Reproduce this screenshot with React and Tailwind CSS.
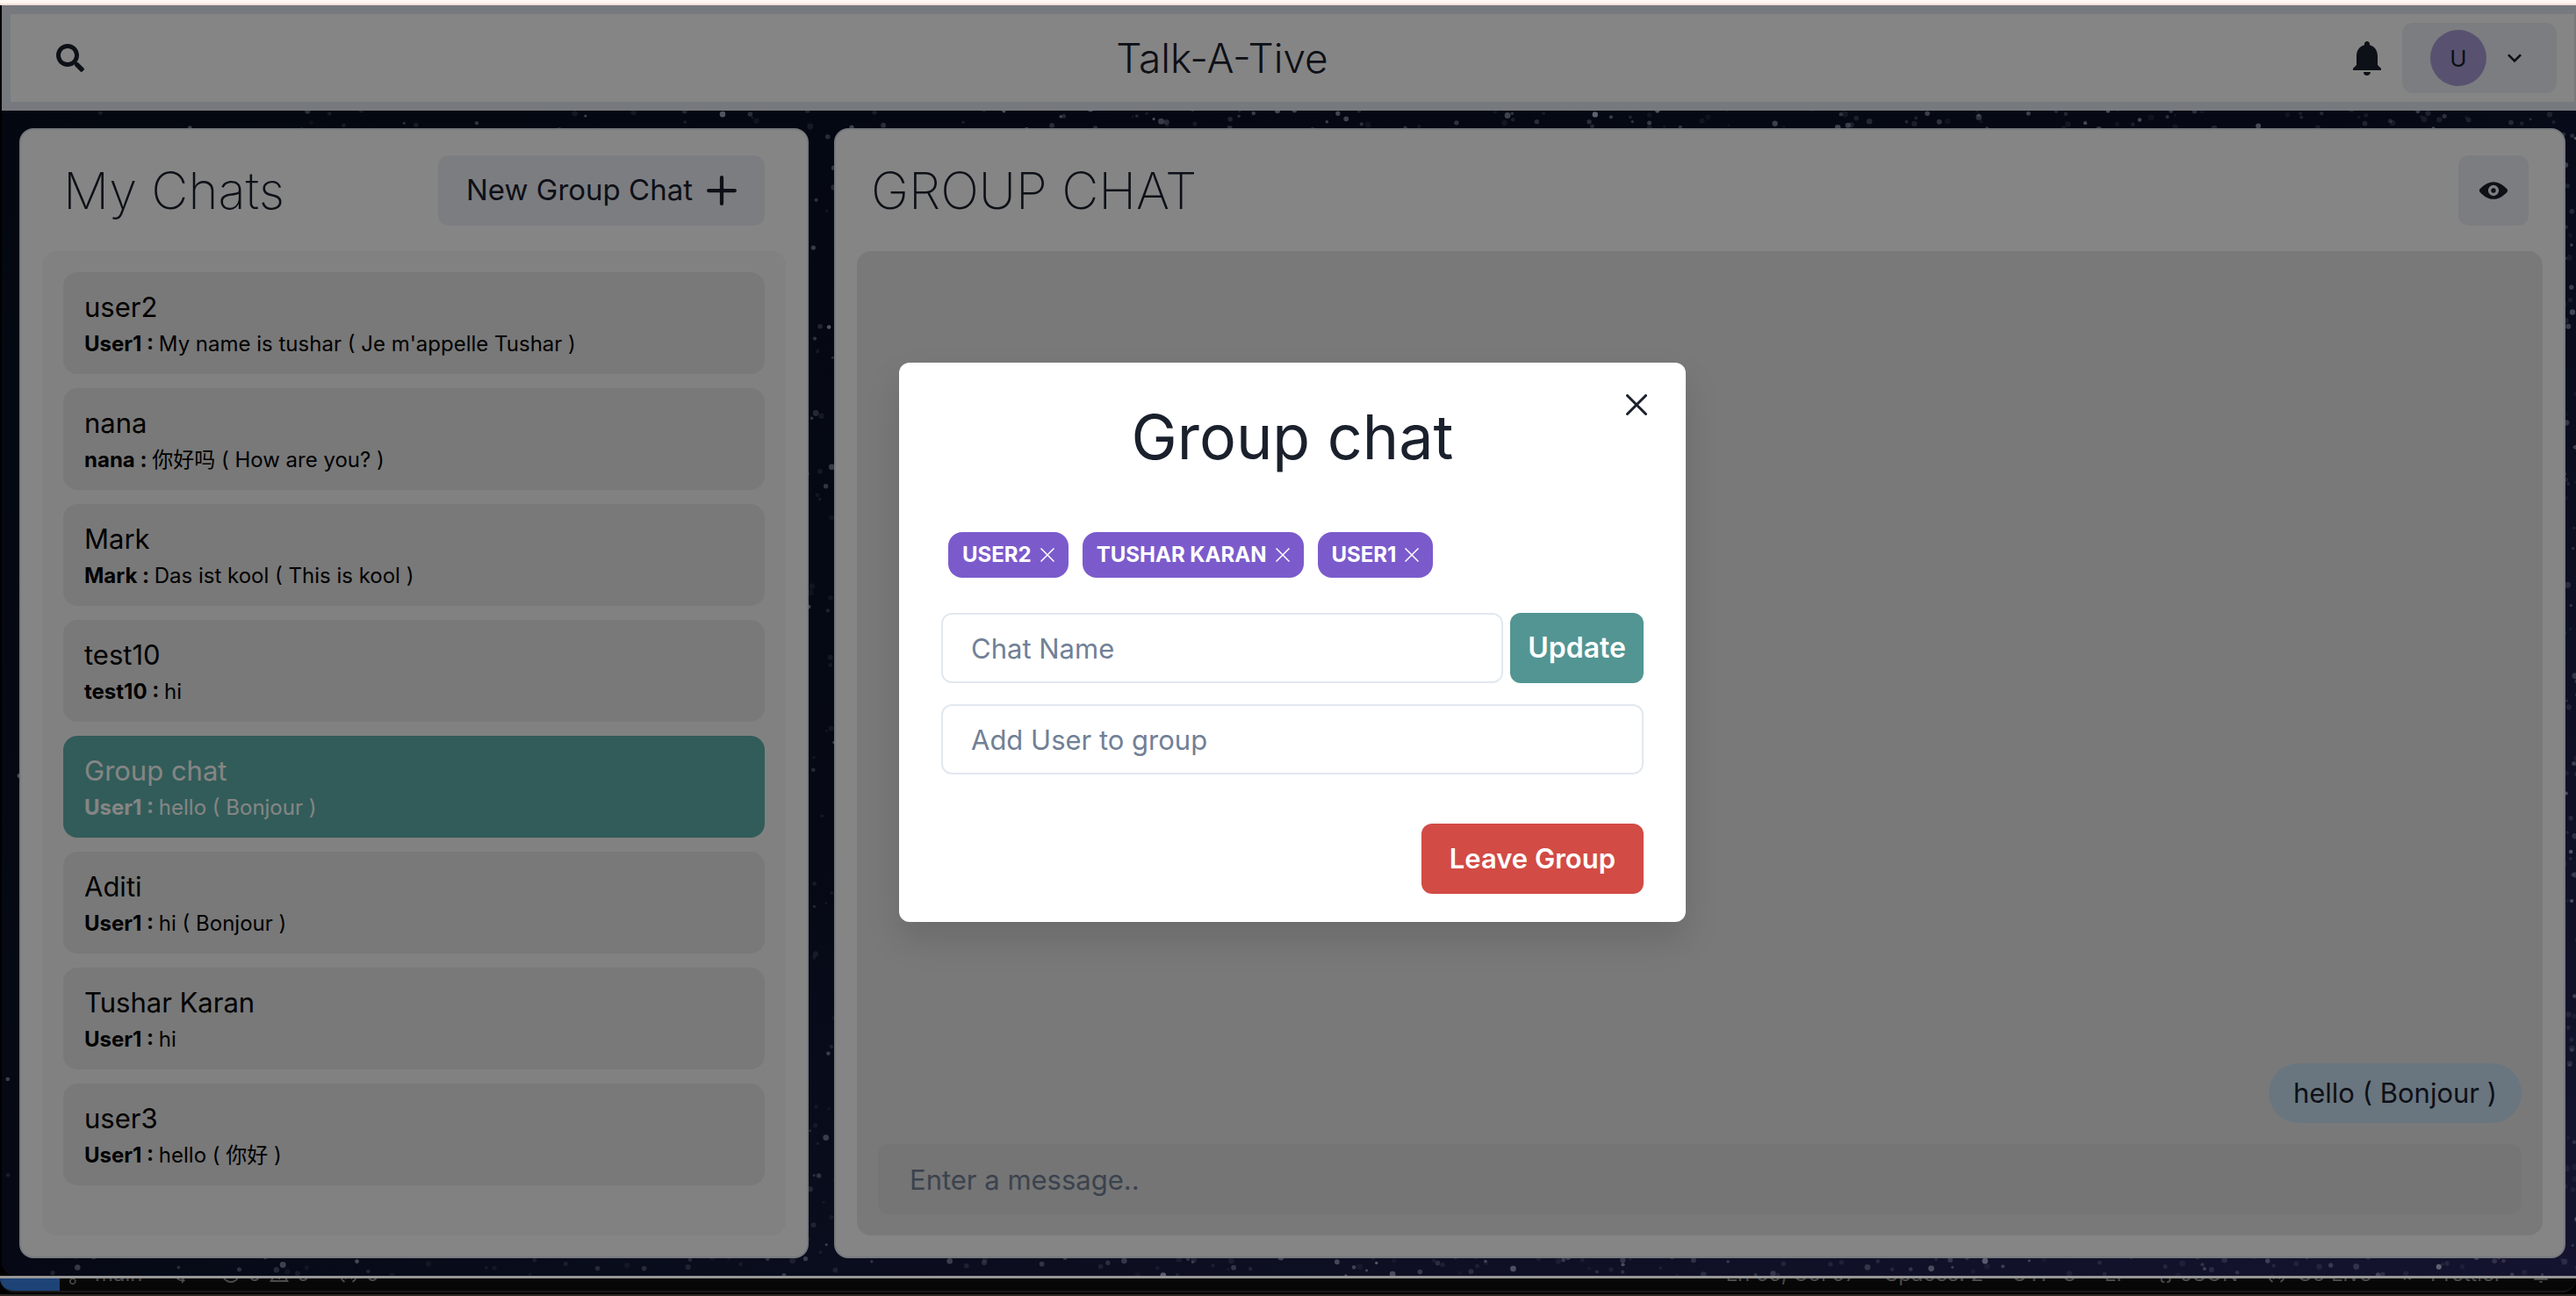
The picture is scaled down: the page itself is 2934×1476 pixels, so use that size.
import React, { useState } from "react";
import { FaSearch } from "react-icons/fa";
import {
  MdDoneAll,
  MdErrorOutline,
  MdNotifications,
  MdSync,
  MdWarningAmber,
  MdWifiTethering,
} from "react-icons/md";
import { VscSourceControl } from "react-icons/vsc";

const chats = [
  { id: 1, name: "user2", sender: "User1", text: "My name is tushar ( Je m'appelle Tushar )" },
  { id: 2, name: "nana", sender: "nana", text: "你好吗 ( How are you? )" },
  { id: 3, name: "Mark", sender: "Mark", text: "Das ist kool ( This is kool )" },
  { id: 4, name: "test10", sender: "test10", text: "hi" },
  { id: 5, name: "Group chat", sender: "User1", text: "hello ( Bonjour )" },
  { id: 6, name: "Aditi", sender: "User1", text: "hi ( Bonjour )" },
  { id: 7, name: "Tushar Karan", sender: "User1", text: "hi" },
  { id: 8, name: "user3", sender: "User1", text: "hello ( 你好 )" },
];

// small seeded generator so the sky looks the same on every load
const makeStars = (count) => {
  let seed = 7;
  const next = () => {
    seed = (seed * 16807) % 2147483647;
    return seed / 2147483647;
  };
  return Array.from({ length: count }, () => ({
    // more stars towards the right side
    x: 2940 * Math.pow(next(), 0.6),
    y: 1450 * next(),
    r: 1.5 + 2 * next(),
    o: 0.1 + 0.8 * next() * next(),
  }));
};

const stars = makeStars(9000);

const StarrySky = () => (
  <svg
    className="absolute inset-0 w-full h-full"
    viewBox="0 0 2940 1450"
    preserveAspectRatio="xMidYMid slice"
    aria-hidden="true"
  >
    <defs>
      <linearGradient id="sky" x1="0" y1="0" x2="1" y2="1">
        <stop offset="0" stopColor="#070f20" />
        <stop offset="0.5" stopColor="#0c1329" />
        <stop offset="1" stopColor="#28275c" />
      </linearGradient>
    </defs>
    <rect width="2940" height="1450" fill="url(#sky)" />
    {stars.map((s, i) => (
      <circle key={i} cx={s.x} cy={s.y} r={s.r} fill="#cfd3f0" opacity={s.o} />
    ))}
  </svg>
);

const AddIcon = () => (
  <svg className="w-[34px] h-[34px]" viewBox="0 0 24 24" fill="currentColor">
    <path d="M0,12a1.5,1.5,0,0,0,1.5,1.5h8.75a.25.25,0,0,1,.25.25V22.5a1.5,1.5,0,0,0,3,0V13.75a.25.25,0,0,1,.25-.25H22.5a1.5,1.5,0,0,0,0-3H13.75a.25.25,0,0,1-.25-.25V1.5a1.5,1.5,0,0,0-3,0v8.75a.25.25,0,0,1-.25.25H1.5A1.5,1.5,0,0,0,0,12Z" />
  </svg>
);

const ChevronDownIcon = () => (
  <svg className="w-8 h-8" viewBox="0 0 24 24" fill="currentColor">
    <path d="M16.59 8.59L12 13.17 7.41 8.59 6 10l6 6 6-6z" />
  </svg>
);

const ViewIcon = () => (
  <svg className="w-8 h-8" viewBox="0 0 24 24" fill="currentColor">
    <path d="M23.432,10.524C20.787,7.614,16.4,4.538,12,4.6,7.6,4.537,3.213,7.615.568,10.524a2.211,2.211,0,0,0,0,2.948C3.182,16.351,7.507,19.4,11.839,19.4h.308c4.347,0,8.671-3.049,11.288-5.929A2.21,2.21,0,0,0,23.432,10.524ZM7.4,12A4.6,4.6,0,1,1,12,16.6,4.6,4.6,0,0,1,7.4,12Z" />
    <circle cx="12" cy="12" r="2" />
  </svg>
);

const CloseIcon = () => (
  <svg className="w-6 h-6" viewBox="0 0 24 24" fill="currentColor">
    <path d="M.439,21.44a1.5,1.5,0,0,0,2.122,2.121L11.823,14.3a.25.25,0,0,1,.354,0l9.262,9.263a1.5,1.5,0,1,0,2.122-2.121L14.3,12.177a.25.25,0,0,1,0-.354l9.263-9.262A1.5,1.5,0,0,0,21.439.44L12.177,9.7a.25.25,0,0,1-.354,0L2.561.44A1.5,1.5,0,0,0,.439,2.561L9.7,11.823a.25.25,0,0,1,0,.354Z" />
  </svg>
);

const Header = () => (
  <header className="relative flex items-center justify-between bg-white border-y-10 border-l-10 border-r-2 border-[#e2e8f0] py-[10px] px-5">
    <button aria-label="Search users" className="h-20 pl-8 pr-6">
      <FaSearch className="w-8 h-8" />
    </button>
    <h1 className="text-[46px] leading-[72px] font-light">Talk-A-Tive</h1>
    <div className="flex items-center gap-2">
      <button aria-label="Notifications" className="p-2">
        <MdNotifications className="w-12 h-12" />
      </button>
      <button
        aria-label="Account"
        className="flex items-center gap-4 h-20 px-8 rounded-xl bg-[#edf0f5]"
      >
        <span className="flex items-center justify-center w-16 h-16 rounded-full bg-[#a99ed6] text-[26px]">
          U
        </span>
        <ChevronDownIcon />
      </button>
    </div>
  </header>
);

const MyChats = ({ selected, onSelect }) => (
  <section className="flex flex-col w-[31%] p-6 bg-white border-2 border-[#e2e8f0] rounded-2xl">
    <div className="flex items-center justify-between px-6 pb-6">
      <h2 className="text-[58px] leading-[90px] font-extralight">My Chats</h2>
      <button className="flex items-center gap-4 h-20 px-8 rounded-xl bg-[#edf0f5] text-[33px]">
        New Group Chat <AddIcon />
      </button>
    </div>
    <div className="flex flex-col flex-1 gap-4 p-6 rounded-2xl bg-[#f8f8f8] text-black overflow-hidden">
      {chats.map((chat) => (
        <button
          key={chat.id}
          onClick={() => onSelect(chat.id)}
          className={`px-6 py-4 rounded-2xl text-left ${
            selected === chat.id ? "bg-[#60b1ab] text-white" : "bg-[#e8e8e8]"
          }`}
        >
          <p className="text-[31px] leading-[48px]">{chat.name}</p>
          <p className="text-[24px] leading-[36px]">
            <b>{chat.sender} : </b>
            {chat.text}
          </p>
        </button>
      ))}
    </div>
  </section>
);

const ChatBox = () => (
  <section className="flex flex-col w-[68%] p-6 bg-white border-2 border-[#e2e8f0] rounded-2xl">
    <div className="flex items-center justify-between px-4 pb-6">
      <h2 className="text-[58px] leading-[90px] font-extralight">GROUP CHAT</h2>
      <button
        aria-label="View group"
        className="flex items-center justify-center w-20 h-20 rounded-xl bg-[#edf0f5]"
      >
        <ViewIcon />
      </button>
    </div>
    <div className="flex flex-col flex-1 justify-end items-end gap-6 p-6 rounded-2xl bg-[#e8e8e8]">
      <p className="px-7 py-[10px] rounded-[34px] bg-[#cae3f4] text-[31px] leading-[48px]">
        hello ( Bonjour )
      </p>
      <input
        type="text"
        aria-label="Message"
        placeholder="Enter a message.."
        className="w-full h-20 px-9 rounded-xl bg-[#e0e0e0] text-[31px] placeholder:text-[#718096]"
      />
    </div>
  </section>
);

const GroupModal = () => {
  const [members, setMembers] = useState(["User2", "Tushar Karan", "User1"]);
  const [chatName, setChatName] = useState("");
  const [search, setSearch] = useState("");

  return (
    <div className="absolute inset-0 flex items-center justify-center pl-2 pt-1 bg-black/48">
      <div
        role="dialog"
        aria-label="Group chat"
        className="relative w-[896px] pb-8 bg-white rounded-xl shadow-[0_20px_40px_rgba(0,0,0,0.12)]"
      >
        <h2 className="py-8 text-center text-[70px] leading-[105px]">Group chat</h2>
        <button
          aria-label="Close"
          className="absolute top-4 right-6 flex items-center justify-center w-16 h-16"
        >
          <CloseIcon />
        </button>

        <div className="px-12 pt-6">
          <div className="flex gap-4 px-2 mb-10">
            {members.map((member) => (
              <button
                key={member}
                onClick={() => setMembers(members.filter((m) => m !== member))}
                className="flex items-center gap-[10px] h-13 px-4 rounded-2xl bg-[#7b5bcc] text-white text-[24px] font-bold uppercase"
              >
                {member}
                <svg className="w-4 h-4" viewBox="0 0 16 16" stroke="currentColor" strokeWidth="1.5">
                  <path d="M0.5 0.5 15.5 15.5M15.5 0.5 0.5 15.5" />
                </svg>
              </button>
            ))}
          </div>

          <div className="flex gap-2 mb-6">
            <input
              type="text"
              aria-label="Chat Name"
              placeholder="Chat Name"
              value={chatName}
              onChange={(e) => setChatName(e.target.value)}
              className="flex-1 min-w-0 h-20 px-8 border-2 border-[#e2e8f0] rounded-xl text-[31px] placeholder:text-[#718096]"
            />
            <button className="h-20 px-5 rounded-xl bg-[#529593] text-white text-[32px] font-semibold">
              Update
            </button>
          </div>
          <input
            type="text"
            aria-label="Add User to group"
            placeholder="Add User to group"
            value={search}
            onChange={(e) => setSearch(e.target.value)}
            className="w-full h-20 px-8 border-2 border-[#e2e8f0] rounded-xl text-[31px] placeholder:text-[#718096]"
          />

          <div className="flex justify-end pt-14">
            <button className="h-20 px-8 rounded-xl bg-[#d24b45] text-white text-[31px] font-semibold">
              Leave Group
            </button>
          </div>
        </div>
      </div>
    </div>
  );
};

// editor status bar that peeks out under the browser window
const StatusBar = () => (
  <footer className="bg-black">
    <div className="flex items-start h-4 pr-7 bg-[#070707] border-b-2 border-[#1a1a1a] rounded-b-2xl overflow-hidden text-[24px] text-[#4a4a4a]">
      <div className="w-[68px] h-4 bg-[#1d4377]" />
      <div className="flex flex-1 items-end justify-between h-[9px] pl-2 overflow-hidden leading-[28px]">
        <div className="flex items-center gap-2">
          <VscSourceControl />
          <span>main</span>
          <MdSync className="ml-6" />
          <MdErrorOutline className="ml-6" />
          <span>0</span>
          <MdWarningAmber />
          <span>0</span>
          <MdWifiTethering className="ml-6" />
          <span>0</span>
        </div>
        <div className="flex items-center gap-8 whitespace-pre">
          <span>Ln 55, Col 57</span>
          <span>Spaces: 2</span>
          <span>UTF-8</span>
          <span>LF</span>
          <span>{"{} JSON"}</span>
          <span className="flex items-center gap-1">
            <MdWifiTethering /> Go Live
          </span>
          <span className="flex items-center gap-1">
            <MdDoneAll /> Prettier
          </span>
          <MdNotifications />
        </div>
      </div>
    </div>
    <div className="h-1 border-b-2 border-[#2c2a26]" />
  </footer>
);

const App = () => {
  const [selected, setSelected] = useState(5);

  return (
    <div className="flex flex-col h-screen bg-black text-[#1a202c] font-['Inter','Noto_Sans_CJK_SC',sans-serif]">
      <div className="h-[6px] bg-[#fff7f2] border-b-2 border-[#f3dfd8]" />
      <div className="relative flex flex-col flex-1 ml-[2px] overflow-hidden rounded-bl-2xl">
        <StarrySky />
        <Header />
        <main className="relative flex flex-1 justify-between p-5 pr-3">
          <MyChats selected={selected} onSelect={setSelected} />
          <ChatBox />
        </main>
        <GroupModal />
      </div>
      <div className="h-[3px] bg-[#969696]" />
      <StatusBar />
    </div>
  );
};

export default App;
